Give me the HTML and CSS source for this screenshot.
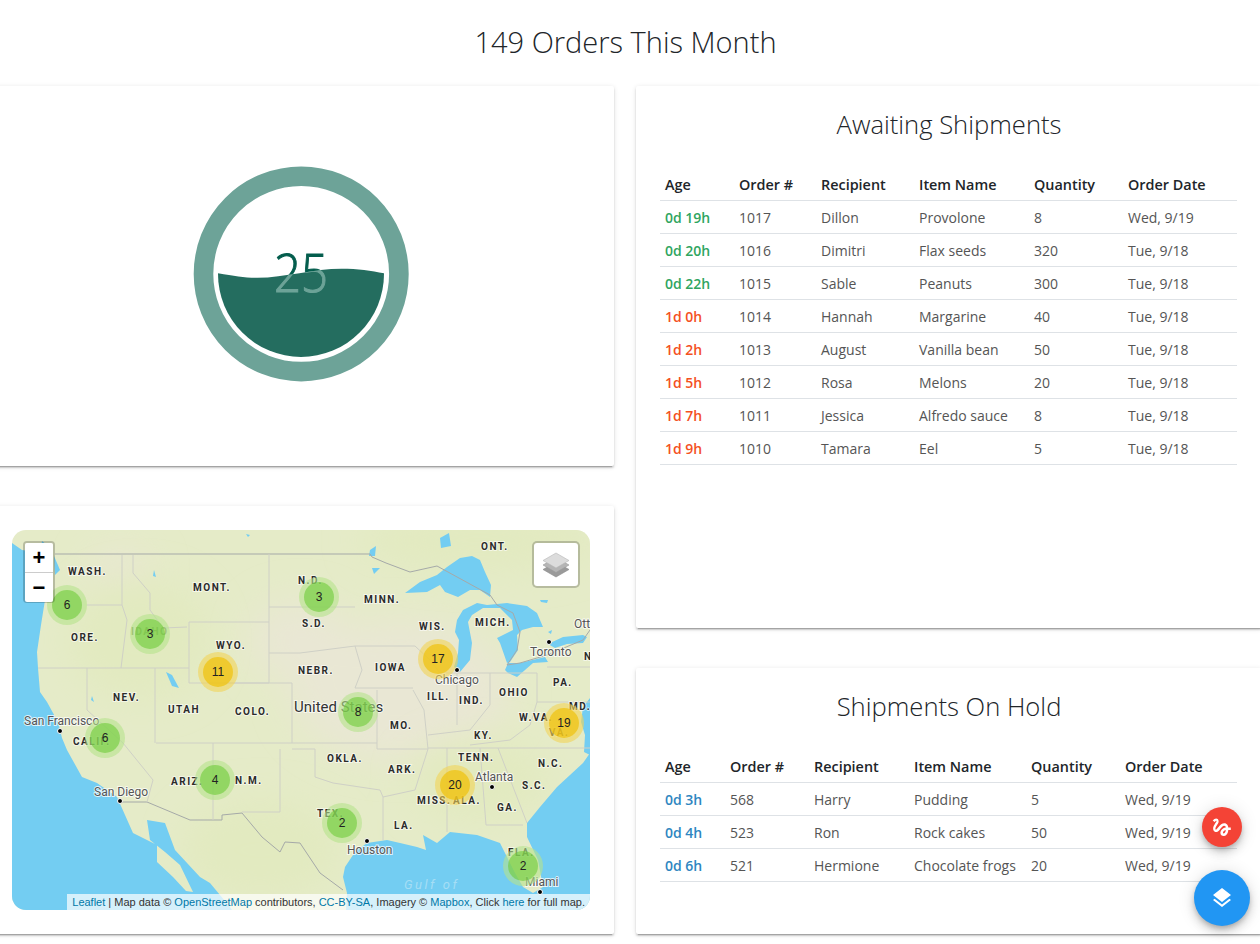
FILE: index.html
```html
<!DOCTYPE html>
<html lang="en">
<head>
<meta charset="utf-8">
<title>149 Orders This Month</title>
<link rel="stylesheet" href="styles.css">
</head>
<body>
<h1 class="page-title">149 Orders This Month</h1>
<main class="grid">
  <div class="col">
    <section class="card card-gauge">
      <svg class="gauge" width="216" height="216" viewBox="193.5 165.5 216 216" role="img" aria-label="25">
        <defs>
          <clipPath id="wave">
            <path d="M218.5 272.7C235 275.5 245 277.3 258 277.3C285 277.3 315 268 342 268C358 268 372 270.6 384.5 272.7V356.5H218.5Z"/>
          </clipPath>
          <clipPath id="inner"><circle cx="301.5" cy="273.4" r="83"/></clipPath>
        </defs>
        <circle cx="301.7" cy="273.4" r="97.7" class="g-ring"/>
        <text x="274.500" y="291.7" class="g-text g-dark" textLength="54" lengthAdjust="spacingAndGlyphs">25</text>
        <g clip-path="url(#inner)">
          <g clip-path="url(#wave)">
            <rect x="215" y="260" width="175" height="100" class="g-fill"/>
            <text x="274.500" y="291.7" class="g-text g-light" textLength="54" lengthAdjust="spacingAndGlyphs">25</text>
          </g>
        </g>
      </svg>
    </section>
    <section class="card card-map">
      <div class="map">
        <svg class="map-svg" width="578" height="380" viewBox="12 530 578 380" role="img" aria-label="Map of order clusters across the United States">
          <defs>
            <filter id="soft" x="-30%" y="-30%" width="160%" height="160%"><feGaussianBlur stdDeviation="18"/></filter>
          </defs>
          <rect x="12" y="530" width="578" height="380" class="land"/>
          <g filter="url(#soft)" class="beige">
            <ellipse cx="400" cy="690" rx="110" ry="70"/>
            <ellipse cx="300" cy="640" rx="50" ry="40"/>
            <ellipse cx="120" cy="570" rx="30" ry="20"/>
          </g>
          <g filter="url(#soft)" class="green">
            <ellipse cx="140" cy="640" rx="70" ry="60"/>
            <ellipse cx="480" cy="540" rx="120" ry="30"/>
            <ellipse cx="480" cy="780" rx="70" ry="40"/>
            <ellipse cx="260" cy="850" rx="80" ry="50"/>
          </g>
          <g class="sea">
            <path d="M12 543L22 550L36 552L43 562L45 600L41 625L37 652L38 668L40 692L47 702L58 722L62 738L67 750L82 777L97 783L117 797L125 815L133 833L157 845L157 862L173 877L186 891L193 892L180 865L165 852L150 840L147 820L165 823L175 850L200 877L210 883L230 907L232 910H12Z"/>
            <path d="M346 910L347 893L343 877L345 867L355 852L367 843L387 840L400 843L417 847L426 850L423 835L437 843L450 832L477 835L500 843L507 857L515 873L523 887L533 893L543 887L538 860L527 837L527 823L540 807L557 787L583 763L590 753V910Z"/>
            <path d="M583 707L590 698V755L584 752L585 735L581 722Z"/>
            <path d="M405 593L420 582L437 575L447 567L460 558L472 556L480 560L485 572L491 585L490 597L480 590L470 590L458 597L445 592L440 585L427 592Z"/>
            <path d="M455 632L457 620L463 610L477 603L487 605L507 603L527 606L537 613L543 627L533 627L522 630L517 635L518 650L510 662L507 663L500 643L497 638L513 630L512 620L500 608L483 608L472 615L468 622L472 643L470 660L460 672L454 667L458 653L459 640Z"/>
            <path d="M505 670L508 663L520 663L545 657L548 662L533 663L517 677L508 673Z"/>
            <path d="M548 644L563 637L583 635L587 637L583 643L567 644L555 648Z"/>
            <path d="M440 538L449 533L451 546L441 548Z"/>
            <path d="M370 550L376 546L375 556L369 556Z"/>
            <path d="M372 568L380 568L374 574Z"/>
            <path d="M166 672L172 675L179 688L172 686Z"/>
            <path d="M154 570L156 577L153 576Z"/>
            <path d="M42 541L47 545L41 550Z"/>
            <path d="M54 556L60 570L55 575Z"/>
            <path d="M540 600L548 600L547 603L541 602Z"/>
            <path d="M548 632L552 630L551 634Z"/>
            <path d="M246 534L250 535L248 537Z"/>
            <path d="M92 696L94 702L91 700Z"/>
          </g>
          <g class="border-main">
            <path d="M55 554H370L372 557L386 563L410 572L437 566L490 595L497 605L513 613L520 632L517 650L507 665L520 663L547 655L583 640L590 630"/>
            <path d="M120 802H147L190 820H222V815L242 813L262 837L280 852L285 842L300 843L320 873L343 890"/>
          </g>
          <g class="border">
            <path d="M38 668H189M122 555V605L127 620L121 668M87 605H122M133 555L133 573L150 593L150 610L163 628L187 627"/>
            <path d="M189 622H269V683H189ZM269 554V622M269 607H355M269 653H300L355 646H415L430 660L440 673H488M87 668V710L123 743L153 780L147 802M155 668V743M213 683H292V743M156 743H377M213 743V820"/>
            <path d="M280 749V812H242"/>
            <path d="M292 749H315V777L333 783L380 790L383 797V840M377 690V749H428L415 790L383 797M355 646L362 670L355 688H413M413 690L424 710L428 749M428 748H590"/>
            <path d="M447 748V832M480 748L486 825H523M490 673V705L470 730L428 735M457 673V725M488 673H507L537 673V702H590M547 667H590M537 702L530 725L510 740L470 745M498 748L527 823"/>
          </g>
          <g class="state">
            <text x="68" y="575">WASH.</text><text x="193" y="591">MONT.</text><text x="481" y="550">ONT.</text>
            <text x="71" y="641">ORE.</text><text x="298" y="584">N.D.</text><text x="364" y="603">MINN.</text>
            <text x="302" y="627">S.D.</text><text x="419" y="630">WIS.</text><text x="475" y="626">MICH.</text>
            <text x="216" y="649">WYO.</text><text x="113" y="701">NEV.</text><text x="168" y="713">UTAH</text>
            <text x="235" y="715">COLO.</text><text x="298" y="674">NEBR.</text><text x="375" y="671">IOWA</text>
            <text x="427" y="700">ILL.</text><text x="459" y="704">IND.</text><text x="499" y="696">OHIO</text>
            <text x="553" y="686">PA.</text><text x="569" y="710">MD.</text><text x="519" y="721">W.VA.</text>
            <text x="390" y="729">MO.</text><text x="474" y="739">KY.</text><text x="327" y="762">OKLA.</text>
            <text x="388" y="773">ARK.</text><text x="458" y="761">TENN.</text><text x="538" y="767">N.C.</text>
            <text x="522" y="789">S.C.</text><text x="497" y="811">GA.</text><text x="417" y="804">MISS.</text>
            <text x="453" y="804">ALA.</text><text x="394" y="829">LA.</text><text x="317" y="817">TEX.</text>
            <text x="171" y="785">ARIZ.</text><text x="235" y="784">N.M.</text><text x="73" y="745">CALIF.</text>
            <text x="508" y="856">FLA.</text><text x="131" y="635" class="state-faded">IDAHO</text>
            <text x="549" y="736">VA.</text><text x="584" y="660">N</text>
          </g>
          <text x="404" y="889" class="gulf">Gulf of</text>
          <g class="dots">
            <circle cx="60" cy="731" r="2.5"/><circle cx="120" cy="801" r="2.5"/><circle cx="367" cy="841" r="2.5"/>
            <circle cx="492" cy="787" r="2.5"/><circle cx="540" cy="892" r="2.5"/><circle cx="457" cy="670" r="2.5"/>
            <circle cx="549" cy="642" r="2.5"/>
          </g>
          <g class="city">
            <text x="24" y="725">San Francisco</text><text x="94" y="796">San Diego</text><text x="347" y="854">Houston</text>
            <text x="475" y="781">Atlanta</text><text x="525" y="886">Miami</text><text x="435" y="684">Chicago</text>
            <text x="530" y="656">Toronto</text><text x="574" y="628">Ott</text>
          </g>
          <text x="294" y="712" class="country">United States</text>
          <g class="clusters">
            <g class="ok"><circle cx="67" cy="605" r="20"/><circle cx="67" cy="605" r="15"/><text x="67" y="609">6</text></g>
            <g class="ok"><circle cx="150" cy="634" r="20"/><circle cx="150" cy="634" r="15"/><text x="150" y="638">3</text></g>
            <g class="warn"><circle cx="218" cy="672" r="20"/><circle cx="218" cy="672" r="15"/><text x="218" y="676">11</text></g>
            <g class="ok"><circle cx="319" cy="597" r="20"/><circle cx="319" cy="597" r="15"/><text x="319" y="601">3</text></g>
            <g class="warn"><circle cx="438" cy="659" r="20"/><circle cx="438" cy="659" r="15"/><text x="438" y="663">17</text></g>
            <g class="ok"><circle cx="358" cy="712" r="20"/><circle cx="358" cy="712" r="15"/><text x="358" y="716">8</text></g>
            <g class="warn"><circle cx="564" cy="723" r="20"/><circle cx="564" cy="723" r="15"/><text x="564" y="727">19</text></g>
            <g class="ok"><circle cx="105" cy="738" r="20"/><circle cx="105" cy="738" r="15"/><text x="105" y="742">6</text></g>
            <g class="ok"><circle cx="215" cy="780" r="20"/><circle cx="215" cy="780" r="15"/><text x="215" y="784">4</text></g>
            <g class="warn"><circle cx="455" cy="785" r="20"/><circle cx="455" cy="785" r="15"/><text x="455" y="789">20</text></g>
            <g class="ok"><circle cx="342" cy="823" r="20"/><circle cx="342" cy="823" r="15"/><text x="342" y="827">2</text></g>
            <g class="ok"><circle cx="523" cy="866" r="20"/><circle cx="523" cy="866" r="15"/><text x="523" y="870">2</text></g>
          </g>
        </svg>
        <div class="zoom-ctl">
          <span class="zoom-btn">+</span>
          <span class="zoom-btn">−</span>
        </div>
        <div class="layers-ctl">
          <svg width="26" height="26" viewBox="0 0 26 26" aria-hidden="true">
            <path class="ly3" d="M13 10L26 17.5L13 25L0 17.5Z"/>
            <path class="ly2" d="M13 5.500L26 13L13 20.500L0 13Z"/>
            <path class="ly1" d="M13 1L26 8.500L13 16L0 8.500Z"/>
          </svg>
        </div>
        <div class="attribution"><a>Leaflet</a> | Map data © <a>OpenStreetMap</a> contributors, <a>CC-BY-SA</a>, Imagery © <a>Mapbox</a>, Click <a>here</a> for full map.</div>
      </div>
    </section>
  </div>
  <div class="col">
    <section class="card card-await">
      <h2 class="card-title">Awaiting Shipments</h2>
      <table class="orders orders-a">
        <thead><tr><th>Age</th><th>Order #</th><th>Recipient</th><th>Item Name</th><th>Quantity</th><th>Order Date</th></tr></thead>
        <tbody>
          <tr><td class="age-new">0d 19h</td><td>1017</td><td>Dillon</td><td>Provolone</td><td>8</td><td>Wed, 9/19</td></tr>
          <tr><td class="age-new">0d 20h</td><td>1016</td><td>Dimitri</td><td>Flax seeds</td><td>320</td><td>Tue, 9/18</td></tr>
          <tr><td class="age-new">0d 22h</td><td>1015</td><td>Sable</td><td>Peanuts</td><td>300</td><td>Tue, 9/18</td></tr>
          <tr><td class="age-old">1d 0h</td><td>1014</td><td>Hannah</td><td>Margarine</td><td>40</td><td>Tue, 9/18</td></tr>
          <tr><td class="age-old">1d 2h</td><td>1013</td><td>August</td><td>Vanilla bean</td><td>50</td><td>Tue, 9/18</td></tr>
          <tr><td class="age-old">1d 5h</td><td>1012</td><td>Rosa</td><td>Melons</td><td>20</td><td>Tue, 9/18</td></tr>
          <tr><td class="age-old">1d 7h</td><td>1011</td><td>Jessica</td><td>Alfredo sauce</td><td>8</td><td>Tue, 9/18</td></tr>
          <tr><td class="age-old">1d 9h</td><td>1010</td><td>Tamara</td><td>Eel</td><td>5</td><td>Tue, 9/18</td></tr>
        </tbody>
      </table>
    </section>
    <section class="card card-hold">
      <h2 class="card-title">Shipments On Hold</h2>
      <table class="orders orders-b">
        <thead><tr><th>Age</th><th>Order #</th><th>Recipient</th><th>Item Name</th><th>Quantity</th><th>Order Date</th></tr></thead>
        <tbody>
          <tr><td class="age-hold">0d 3h</td><td>568</td><td>Harry</td><td>Pudding</td><td>5</td><td>Wed, 9/19</td></tr>
          <tr><td class="age-hold">0d 4h</td><td>523</td><td>Ron</td><td>Rock cakes</td><td>50</td><td>Wed, 9/19</td></tr>
          <tr><td class="age-hold">0d 6h</td><td>521</td><td>Hermione</td><td>Chocolate frogs</td><td>20</td><td>Wed, 9/19</td></tr>
        </tbody>
      </table>
    </section>
  </div>
</main>
<button class="fab fab-red" aria-label="Draw">
  <svg width="24" height="24" viewBox="0 0 24 24"><path d="M4.59,6.89C5.29,6.18 6,5.54 6.32,5.67C6.82,5.87 6.32,6.7 6,7.19C5.75,7.61 3.14,11.08 3.14,13.5C3.14,14.78 3.62,15.84 4.5,16.5C5.23,17.03 6.19,17.2 7.08,16.94C8.12,16.64 8.97,15.58 10.06,14.23C11.25,12.76 12.84,10.84 14.06,10.84C15.65,10.84 15.67,11.83 15.77,12.6C12,13.24 10.4,16.27 10.4,17.97C10.4,19.67 11.84,21.06 13.61,21.06C15.24,21.06 17.9,19.73 18.3,14.96H20.77V12.46H18.3C18.15,10.81 17.21,8.26 14.27,8.26C12.02,8.26 10.09,10.17 9.33,11.1C8.75,11.83 7.27,13.6 7.04,13.84C6.79,14.14 6.36,14.68 5.93,14.68C5.5,14.68 5.21,13.87 5.56,12.81C5.9,11.75 6.92,10.03 7.36,9.39C8.12,8.28 8.63,7.52 8.63,6.2C8.63,4.09 7.06,3.42 6.21,3.42C4.92,3.42 3.79,4.4 3.54,4.64C3.19,5 2.9,5.3 2.68,5.56L4.59,6.89M13.68,18.56C13.37,18.56 12.94,18.3 12.94,17.84C12.94,17.24 13.67,15.64 15.81,15.08C15.5,17.96 14.29,18.56 13.68,18.56Z"/></svg>
</button>
<button class="fab fab-blue" aria-label="Layers">
  <svg width="24" height="24" viewBox="0 0 24 24"><path d="M12,16L19.36,10.27L21,9L12,2L3,9L4.63,10.27M12,18.54L4.62,12.81L3,14.07L12,21.07L21,14.07L19.37,12.8L12,18.54Z"/></svg>
</button>
</body>
</html>
```
FILE: styles.css
```css
* { box-sizing: border-box; }
html, body { margin: 0; height: 944px; overflow: hidden; background: #fff; }
body { position: relative; font-family: "Open Sans", "Noto Sans", sans-serif; color: #212529; }

.page-title {
  margin: 0; height: 86px; padding-top: 20px;
  font-size: 29px; line-height: 44px; font-weight: 300; text-align: center;
  color: #212529; padding-right: 9px;
}

.grid {
  display: grid; grid-template-columns: 626px 626px; column-gap: 22px;
  margin-left: -12px; width: 1274px;
}
.col { display: flex; flex-direction: column; gap: 40px; }

.card {
  background: #fff; border-radius: 2px;
  box-shadow: 0 3px 1px -2px rgba(0,0,0,.2), 0 2px 2px 0 rgba(0,0,0,.14), 0 1px 5px 0 rgba(0,0,0,.12);
}
.card-gauge { height: 380px; display: flex; align-items: center; justify-content: center; }
.gauge { display: block; margin-top: -5px; overflow: visible; }
.card-map { height: 428px; padding: 24px; }
.card-await { height: 542px; padding: 20px 24px 0; }
.card-hold { height: 266px; padding: 20px 24px 0; }

.card-title {
  margin: 0 0 23px; font-size: 25.6px; line-height: 38px; font-weight: 300;
  text-align: center; color: #212529;
}

.orders { width: 577px; table-layout: fixed; border-collapse: collapse; font-size: 14px; }
.orders th, .orders td { padding: 2px 5px 0; border-bottom: 1px solid #dee2e6; text-align: left; white-space: nowrap; }
.orders th { height: 33px; font-size: 14.4px; font-weight: 600; color: #212529; }
.orders td { height: 33px; font-weight: 400; color: #555; }

.orders-a th:nth-child(1) { width: 74px; }
.orders-a th:nth-child(2) { width: 82px; }
.orders-a th:nth-child(3) { width: 98px; }
.orders-a th:nth-child(4) { width: 115px; }
.orders-a th:nth-child(5) { width: 94px; }
.orders-b th:nth-child(1) { width: 65px; }
.orders-b th:nth-child(2) { width: 84px; }
.orders-b th:nth-child(3) { width: 100px; }
.orders-b th:nth-child(4) { width: 117px; }
.orders-b th:nth-child(5) { width: 94px; }

.orders td.age-new { color: #2fa55f; font-weight: 600; }
.orders td.age-old { color: #f4511e; font-weight: 600; }
.orders td.age-hold { color: #2e86c1; font-weight: 600; }

/* gauge */
.g-ring { fill: none; stroke: #6da398; stroke-width: 19.6; }
.g-fill { fill: #246d5f; }
.g-text { font-family: "Open Sans", sans-serif; font-size: 53px; font-weight: 300; stroke-width: 1px; }
.g-dark { fill: #045d4d; stroke: #045d4d; }
.g-light { fill: #6da398; stroke: #6da398; }

/* map */
.map { position: relative; width: 578px; height: 380px; border-radius: 14px; overflow: hidden; }
.map-svg { display: block; }
.land { fill: #e5ebc8; }
.beige { fill: #e9e7d4; }
.green { fill: #e2eac0; }
.sea { fill: #73cdf2; }
.border { fill: none; stroke: #cfd0c6; stroke-width: 1; }
.border-main { fill: none; stroke: #a5a9a8; stroke-width: 1; }
.state text {
  font-family: "Roboto", sans-serif; font-size: 10px; font-weight: 700; letter-spacing: 1.5px;
  fill: #2b2b2b; stroke: rgba(255,255,255,.6); stroke-width: 2px; paint-order: stroke;
}
.state .state-faded { fill: #7e8f56; stroke: none; }
.city text {
  font-family: "Roboto", sans-serif; font-size: 12px; fill: #555;
  stroke: rgba(255,255,255,.75); stroke-width: 2px; paint-order: stroke;
}
.country { font-family: "Roboto", sans-serif; font-size: 15px; fill: #333; stroke: rgba(255,255,255,.7); stroke-width: 2px; paint-order: stroke; }
.gulf { font-family: "Roboto", sans-serif; font-size: 13px; font-style: italic; letter-spacing: 2.5px; fill: #a5def5; }
.dots { fill: #000; stroke: #fff; stroke-width: 1; }
.clusters text { font-family: "Liberation Sans", sans-serif; font-size: 12px; text-anchor: middle; fill: #222; }
.ok circle:nth-child(1) { fill: rgba(181,226,140,.6); }
.ok circle:nth-child(2) { fill: rgba(110,204,57,.6); }
.warn circle:nth-child(1) { fill: rgba(241,211,87,.6); }
.warn circle:nth-child(2) { fill: rgba(240,194,12,.7); }

.zoom-ctl {
  position: absolute; left: 11px; top: 11px; width: 32px; height: 62px;
  border: 2px solid rgba(0,0,0,.2); border-radius: 4px; background-clip: padding-box;
  display: flex; flex-direction: column;
}
.zoom-btn {
  display: block; width: 28px; height: 29px; background: #fff; color: #000; text-align: center;
  font: 700 22px/29px "Liberation Sans", sans-serif;
}
.zoom-btn:first-child { height: 30px; border-bottom: 1px solid #ccc; border-radius: 2px 2px 0 0; }
.zoom-btn:last-child { border-radius: 0 0 2px 2px; }
.layers-ctl {
  position: absolute; right: 10px; top: 11px; width: 48px; height: 47px;
  background: #fff; border: 2px solid rgba(0,0,0,.2); border-radius: 5px; background-clip: padding-box;
  display: flex; align-items: center; justify-content: center;
}
.ly1 { fill: #dcdcdc; stroke: #b5b5b5; stroke-width: .6; }
.ly2 { fill: #b5b5b5; stroke: #9a9a9a; stroke-width: .6; }
.ly3 { fill: #9a9a9a; stroke: #8a8a8a; stroke-width: .6; }
.attribution {
  position: absolute; right: 0; bottom: 0; height: 16px; padding: 0 5px;
  background: rgba(255,255,255,.7); color: #333; white-space: nowrap;
  font: 11px/16px "Liberation Sans", sans-serif;
}
.attribution a { color: #0078a8; }

/* floating buttons */
.fab {
  position: absolute; display: flex; align-items: center; justify-content: center;
  border: 0; padding: 0; border-radius: 50%; fill: #fff;
  box-shadow: 0 3px 5px -1px rgba(0,0,0,.2), 0 6px 10px 0 rgba(0,0,0,.14), 0 1px 18px 0 rgba(0,0,0,.12);
}
.fab-red { left: 1202px; top: 807px; width: 40px; height: 40px; background: #f44336; }
.fab-blue { left: 1194px; top: 870px; width: 56px; height: 56px; background: #2196f3; }
```
